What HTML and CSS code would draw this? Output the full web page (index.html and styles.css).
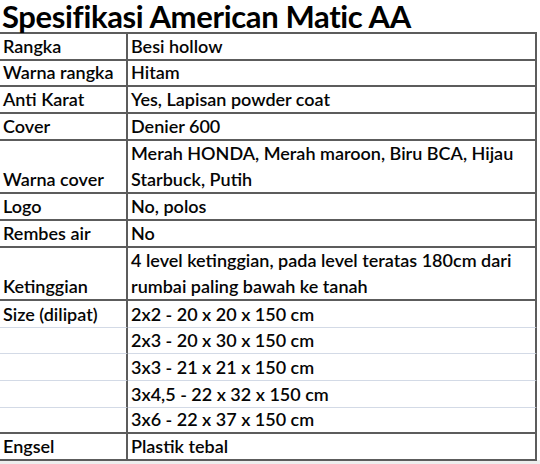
FILE: index.html
```html
<!DOCTYPE html>
<html lang="id">
<head>
<meta charset="utf-8">
<title>Spesifikasi American Matic AA</title>
<link rel="stylesheet" href="styles.css">
</head>
<body>
<div class="page">
  <h1 class="title">Spesifikasi American Matic AA</h1>
  <div class="sheet">
    <div class="cell label">Rangka</div><div class="cell value">Besi hollow</div>
    <div class="cell label">Warna rangka</div><div class="cell value">Hitam</div>
    <div class="cell label">Anti Karat</div><div class="cell value">Yes, Lapisan powder coat</div>
    <div class="cell label">Cover</div><div class="cell value">Denier 600</div>
    <div class="cell label tall">Warna cover</div><div class="cell value tall">Merah HONDA, Merah maroon, Biru BCA, Hijau<br>Starbuck, Putih</div>
    <div class="cell label">Logo</div><div class="cell value">No, polos</div>
    <div class="cell label">Rembes air</div><div class="cell value">No</div>
    <div class="cell label tall">Ketinggian</div><div class="cell value tall">4 level ketinggian, pada level teratas 180cm dari<br>rumbai paling bawah ke tanah</div>
    <div class="cell label sub">Size (dilipat)</div><div class="cell value sub">2x2 - 20 x 20 x 150 cm</div>
    <div class="cell label sub"></div><div class="cell value sub">2x3 - 20 x 30 x 150 cm</div>
    <div class="cell label sub"></div><div class="cell value sub">3x3 - 21 x 21 x 150 cm</div>
    <div class="cell label sub"></div><div class="cell value sub">3x4,5 - 22 x 32 x 150 cm</div>
    <div class="cell label"></div><div class="cell value">3x6 - 22 x 37 x 150 cm</div>
    <div class="cell label">Engsel</div><div class="cell value">Plastik tebal</div>
  </div>
</div>
</body>
</html>
```
FILE: styles.css
```css
html, body {
  margin: 0;
  padding: 0;
  background: #ffffff;
}
body {
  font-family: Lato, "Liberation Sans", sans-serif;
  color: #000000;
  width: 540px;
  height: 464px;
  overflow: hidden;
  background: linear-gradient(#ffffff, #ffffff) no-repeat 0 0 / 540px 460px, #eeeeee;
}
.page {
  width: 540px;
  padding-top: 1px;
}
.title {
  margin: 0;
  height: 32px;
  box-sizing: border-box;
  padding-left: 2px;
  font-size: 31px;
  font-weight: 700;
  line-height: 30px;
  letter-spacing: -0.35px;
  white-space: nowrap;
}
.sheet {
  display: grid;
  grid-template-columns: 128px 409px;
  grid-auto-rows: 26.7px;
  border-top: 2px solid #5c5c5c;
  margin-top: -1px;
  width: 537px;
  box-sizing: border-box;
}
.cell {
  box-sizing: border-box;
  border-bottom: 2px solid #5c5c5c;
  display: flex;
  align-items: flex-end;
  font-size: 18px;
  font-weight: 600;
  line-height: 26px;
  padding: 0 0 0 3px;
  white-space: nowrap;
  color: #050505;
}
.label {
  border-right: 2px solid #5c5c5c;
}
.value {
  border-right: 2px solid #5c5c5c;
  padding-left: 3px;
}
.tall {
  grid-row: span 2;
}
.sub {
  border-bottom: 1px solid #d3dae6;
}
```
